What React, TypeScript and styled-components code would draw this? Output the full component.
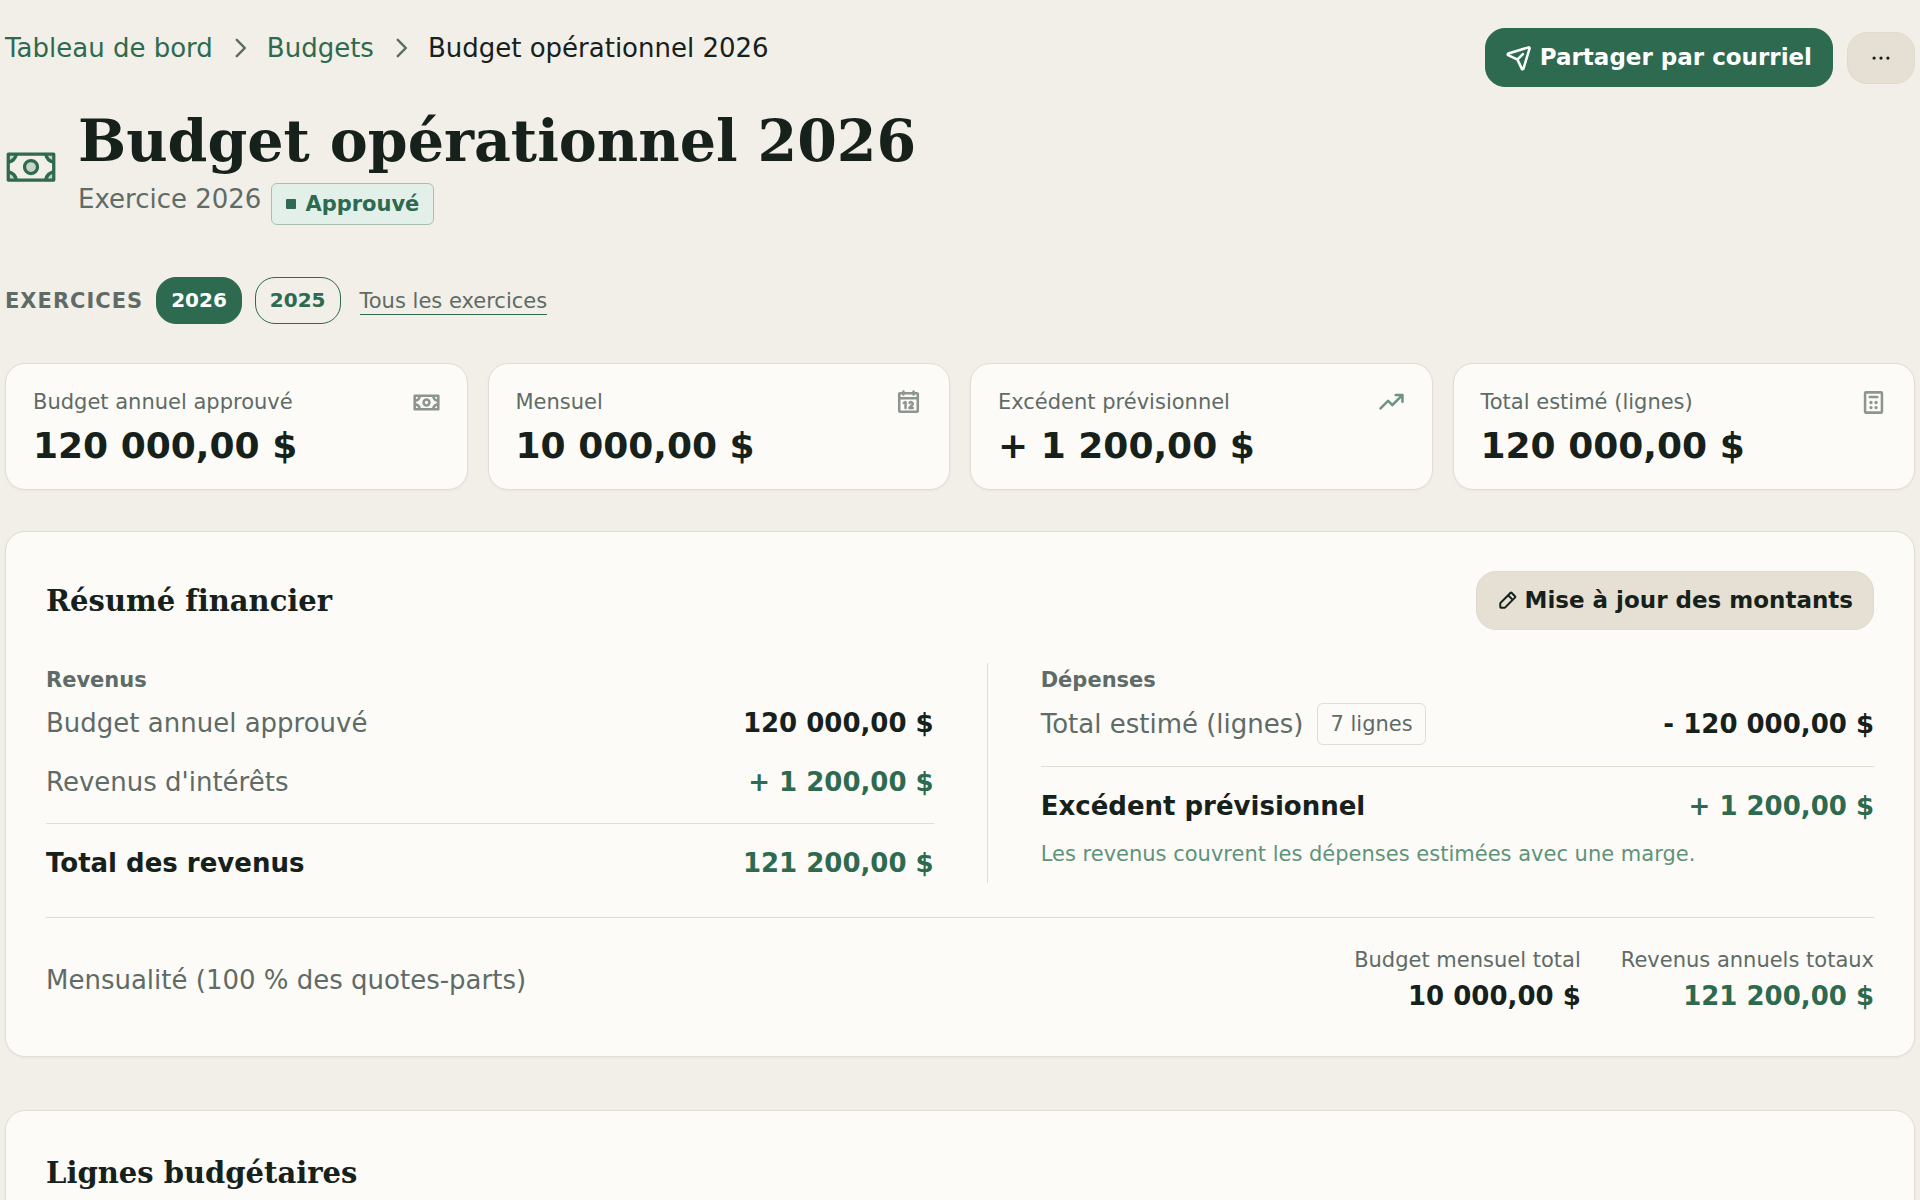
import React from "react";
import styled, { createGlobalStyle, css } from "styled-components";
import {
  PiCalculatorBold,
  PiCalendarBold,
  PiCaretRightBold,
  PiDotsThreeBold,
  PiMoneyBold,
  PiMoneyDuotone,
  PiPaperPlaneTiltBold,
  PiPencilSimpleBold,
  PiTrendUpBold,
} from "react-icons/pi";

const color = {
  page: "#f2eee8",
  surface: "#fcfbf7",
  line: "#e1ddd4",
  ink: "#16211c",
  muted: "#5f6b66",
  green: "#2d6a4f",
  softGreen: "#5f9379",
  beige: "#e6e0d4",
  mint: "#e3f0e9",
};

const sans = `"DejaVu Sans", Verdana, sans-serif`;
const serif = `"DejaVu Serif", Georgia, serif`;

const GlobalStyle = createGlobalStyle`
  *, *::before, *::after { box-sizing: border-box; }
  body {
    margin: 0;
    background: ${color.page};
    color: ${color.ink};
    font: 26px/40px ${sans};
  }
  h1, h2, h3, p, dl, dd, ol { margin: 0; padding: 0; }
  svg { display: block; flex: none; }
`;

const Page = styled.main`
  padding: 28px 5px 40px;
`;

const TopBar = styled.header`
  display: flex;
  justify-content: space-between;
  align-items: flex-start;
  gap: 20px;
`;

const Crumbs = styled.ol`
  display: flex;
  flex-wrap: wrap;
  list-style: none;
`;

const Crumb = styled.li`
  display: flex;
  align-items: center;
  gap: 14px;

  & + & {
    margin-left: 14px;
  }

  svg {
    color: ${color.muted};
  }
`;

const CrumbLink = styled.a`
  color: ${color.green};
  text-decoration: none;
`;

const Actions = styled.div`
  display: flex;
  align-items: center;
  gap: 14px;
`;

const Button = styled.button<{ $tone: "primary" | "neutral" }>`
  display: inline-flex;
  align-items: center;
  gap: 7px;
  padding: 11px 20px;
  border: 1px solid ${(p) => (p.$tone === "primary" ? color.green : "#e0dace")};
  border-radius: 20px;
  background: ${(p) => (p.$tone === "primary" ? color.green : color.beige)};
  color: ${(p) => (p.$tone === "primary" ? "#fff" : color.ink)};
  font: bold 23px/35px ${sans};
  white-space: nowrap;
  cursor: pointer;
`;

const MoreButton = styled(Button)`
  padding: 12px 20px;
`;

const TitleBlock = styled.div`
  display: flex;
  align-items: center;
  gap: 21px;
  margin-top: 21px;
  color: ${color.green};
`;

const PageTitle = styled.h1`
  color: ${color.ink};
  font: bold 57px/66px ${serif};
`;

const Subtitle = styled.div`
  display: flex;
  align-items: flex-start;
  gap: 10px;
  margin-top: 9px;
  color: ${color.muted};
  line-height: 32px;
`;

const tag = css`
  display: inline-flex;
  align-items: center;
  border: 1px solid ${color.line};
  border-radius: 6px;
  font-size: 21px;
  line-height: 40px;
`;

const StatusTag = styled.span`
  ${tag}
  gap: 9px;
  padding: 0 14px;
  border-color: #a9bfb3;
  background: ${color.mint};
  color: ${color.green};
  font-weight: bold;

  &::before {
    content: "";
    width: 10px;
    height: 10px;
    border-radius: 1px;
    background: ${color.green};
  }
`;

const CountTag = styled.span`
  ${tag}
  padding: 0 12px;
`;

const YearNav = styled.nav`
  display: flex;
  align-items: center;
  gap: 13px;
  margin: 52px 0 39px;
`;

const YearLabel = styled.span`
  color: ${color.muted};
  font-size: 21px;
  font-weight: bold;
  letter-spacing: 1px;
  text-transform: uppercase;
`;

const YearLink = styled.a<{ $current?: boolean }>`
  padding: 0 14px;
  border: 1px solid ${color.green};
  border-radius: 20px;
  background: ${(p) => (p.$current ? color.green : "transparent")};
  color: ${(p) => (p.$current ? "#fff" : color.green)};
  font-size: 20px;
  font-weight: bold;
  line-height: 45px;
  text-decoration: none;
`;

const AllYearsLink = styled.a`
  margin-left: 6px;
  padding-top: 2px;
  border-bottom: 1px solid ${color.green};
  color: ${color.muted};
  font-size: 21px;
  line-height: 26px;
  text-decoration: none;
`;

const Cards = styled.dl`
  display: grid;
  grid-template-columns: repeat(4, 1fr);
  gap: 20px;
`;

const panel = css`
  border: 1px solid ${color.line};
  border-radius: 20px;
  background: ${color.surface};
  box-shadow: 0 1px 3px rgba(60, 50, 30, 0.04);
`;

const Card = styled.div`
  ${panel}
  padding: 22px 27px 21px;
`;

const CardLabel = styled.dt`
  display: flex;
  justify-content: space-between;
  align-items: center;
  margin-bottom: 6px;
  color: ${color.muted};
  font-size: 21px;
  line-height: 32px;
`;

const CardIcon = styled.span<{ $positive?: boolean }>`
  color: ${(p) => (p.$positive ? color.green : color.muted)};
  opacity: 0.7;
`;

const CardValue = styled.dd`
  font-size: 36px;
  font-weight: bold;
  line-height: 44px;
`;

const Section = styled.section<{ $gap: number }>`
  ${panel}
  margin-top: ${(p) => p.$gap}px;
  padding: 39px 40px 40px;
`;

const SectionHead = styled.div`
  display: flex;
  justify-content: space-between;
  align-items: center;
  margin-bottom: 33px;
`;

const SectionTitle = styled.h2`
  font: bold 29px/46px ${serif};
  font-variant-ligatures: none;
`;

const Columns = styled.div`
  display: grid;
  grid-template-columns: 17fr 16fr;
`;

const Column = styled.div`
  &:first-child {
    padding-right: 53px;
    border-right: 1px solid ${color.line};
  }

  &:last-child {
    padding-left: 53px;
  }
`;

const ColumnTitle = styled.h3`
  margin-bottom: 6px;
  color: ${color.muted};
  font-size: 21px;
  line-height: 34px;
`;

const Rows = styled.dl`
  display: grid;
  gap: 19px;
`;

const Row = styled.div<{ $total?: boolean }>`
  display: flex;
  justify-content: space-between;
  align-items: center;
  color: ${color.muted};

  ${(p) =>
    p.$total &&
    css`
      margin-top: 2px;
      padding-top: 19px;
      border-top: 1px solid ${color.line};
      color: ${color.ink};
      font-weight: bold;
    `}
`;

const RowLabel = styled.dt`
  display: flex;
  align-items: center;
  gap: 14px;
`;

const Amount = styled.dd<{ $positive?: boolean }>`
  color: ${(p) => (p.$positive ? color.green : color.ink)};
  font-weight: bold;
  white-space: nowrap;
`;

const Note = styled.p`
  margin-top: 12px;
  color: ${color.softGreen};
  font-size: 21px;
  line-height: 32px;
`;

const Footer = styled.div`
  display: flex;
  justify-content: space-between;
  align-items: center;
  margin-top: 34px;
  padding-top: 26px;
  border-top: 1px solid ${color.line};
  color: ${color.muted};
`;

const Totals = styled.dl`
  display: flex;
  gap: 40px;
  text-align: right;
`;

const TotalLabel = styled.dt`
  font-size: 21px;
  line-height: 32px;
`;

const cards = [
  { label: "Budget annuel approuvé", value: "120 000,00 $", Icon: PiMoneyBold },
  { label: "Mensuel", value: "10 000,00 $", Icon: PiCalendarBold },
  { label: "Excédent prévisionnel", value: "+ 1 200,00 $", Icon: PiTrendUpBold, positive: true },
  { label: "Total estimé (lignes)", value: "120 000,00 $", Icon: PiCalculatorBold },
];

export default function App() {
  return (
    <>
      <GlobalStyle />
      <Page>
        <TopBar>
          <nav aria-label="Fil d'Ariane">
            <Crumbs>
              <Crumb>
                <CrumbLink href="#tableau">Tableau de bord</CrumbLink>
              </Crumb>
              <Crumb>
                <PiCaretRightBold size={26} />
                <CrumbLink href="#budgets">Budgets</CrumbLink>
              </Crumb>
              <Crumb aria-current="page">
                <PiCaretRightBold size={26} />
                Budget opérationnel 2026
              </Crumb>
            </Crumbs>
          </nav>
          <Actions>
            <Button type="button" $tone="primary">
              <PiPaperPlaneTiltBold size={27} />
              Partager par courriel
            </Button>
            <MoreButton type="button" $tone="neutral" aria-label="Plus d'actions">
              <PiDotsThreeBold size={26} />
            </MoreButton>
          </Actions>
        </TopBar>

        <TitleBlock>
          <PiMoneyDuotone size={52} />
          <div>
            <PageTitle>Budget opérationnel 2026</PageTitle>
            <Subtitle>
              Exercice 2026 <StatusTag>Approuvé</StatusTag>
            </Subtitle>
          </div>
        </TitleBlock>

        <YearNav aria-label="Exercices">
          <YearLabel>Exercices</YearLabel>
          <YearLink href="#2026" $current aria-current="true">
            2026
          </YearLink>
          <YearLink href="#2025">2025</YearLink>
          <AllYearsLink href="#exercices">Tous les exercices</AllYearsLink>
        </YearNav>

        <Cards>
          {cards.map(({ label, value, Icon, positive }) => (
            <Card key={label}>
              <CardLabel>
                {label}
                <CardIcon $positive={positive}>
                  <Icon size={27} />
                </CardIcon>
              </CardLabel>
              <CardValue>{value}</CardValue>
            </Card>
          ))}
        </Cards>

        <Section $gap={41}>
          <SectionHead>
            <SectionTitle>Résumé financier</SectionTitle>
            <Button type="button" $tone="neutral">
              <PiPencilSimpleBold size={21} />
              Mise à jour des montants
            </Button>
          </SectionHead>

          <Columns>
            <Column>
              <ColumnTitle>Revenus</ColumnTitle>
              <Rows>
                <Row>
                  <RowLabel>Budget annuel approuvé</RowLabel>
                  <Amount>120 000,00 $</Amount>
                </Row>
                <Row>
                  <RowLabel>Revenus d'intérêts</RowLabel>
                  <Amount $positive>+ 1 200,00 $</Amount>
                </Row>
                <Row $total>
                  <RowLabel>Total des revenus</RowLabel>
                  <Amount $positive>121 200,00 $</Amount>
                </Row>
              </Rows>
            </Column>
            <Column>
              <ColumnTitle>Dépenses</ColumnTitle>
              <Rows>
                <Row>
                  <RowLabel>
                    Total estimé (lignes) <CountTag>7 lignes</CountTag>
                  </RowLabel>
                  <Amount>- 120 000,00 $</Amount>
                </Row>
                <Row $total>
                  <RowLabel>Excédent prévisionnel</RowLabel>
                  <Amount $positive>+ 1 200,00 $</Amount>
                </Row>
              </Rows>
              <Note>Les revenus couvrent les dépenses estimées avec une marge.</Note>
            </Column>
          </Columns>

          <Footer>
            <span>Mensualité (100 % des quotes-parts)</span>
            <Totals>
              <div>
                <TotalLabel>Budget mensuel total</TotalLabel>
                <Amount>10 000,00 $</Amount>
              </div>
              <div>
                <TotalLabel>Revenus annuels totaux</TotalLabel>
                <Amount $positive>121 200,00 $</Amount>
              </div>
            </Totals>
          </Footer>
        </Section>

        <Section $gap={53}>
          <SectionTitle>Lignes budgétaires</SectionTitle>
        </Section>
      </Page>
    </>
  );
}
